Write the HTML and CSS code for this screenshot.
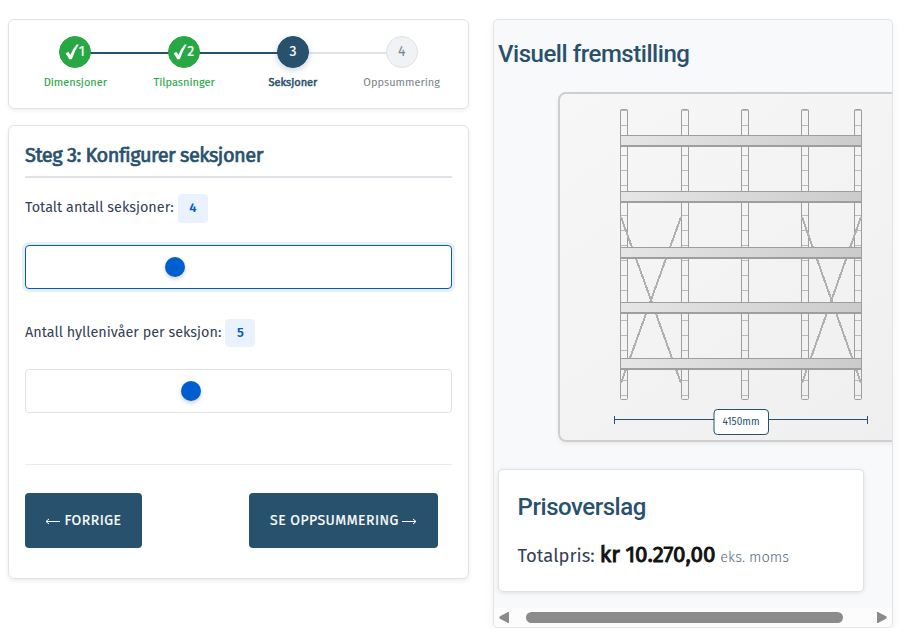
FILE: index.html
```html
<!DOCTYPE html>
<html lang="nb">
<head>
    <meta charset="UTF-8">
    <meta name="viewport" content="width=device-width, initial-scale=1.0">
    <title>Reolkonfigurator</title>
    <link rel="stylesheet" href="styles.css">
</head>
<body>
    <div class="konfigurator">
        <div class="venstre">
            <!-- Fremdrift -->
            <div class="fremdrift">
                <div class="steg ferdig">
                    <div class="sirkel"><svg class="hake" viewBox="0 0 14 16"><path d="M.6 9.4 L3.2 7.7 L5.4 10.8 Q8 4.5 11.7 .5 L13.8 .5 Q9.4 7 6.8 15.3 L4.2 15.3 Q2.8 12 .6 9.4Z"/></svg><span>1</span></div>
                    <div class="steg-navn">Dimensjoner</div>
                </div>
                <div class="steg ferdig">
                    <div class="sirkel"><svg class="hake" viewBox="0 0 14 16"><path d="M.6 9.4 L3.2 7.7 L5.4 10.8 Q8 4.5 11.7 .5 L13.8 .5 Q9.4 7 6.8 15.3 L4.2 15.3 Q2.8 12 .6 9.4Z"/></svg><span>2</span></div>
                    <div class="steg-navn">Tilpasninger</div>
                </div>
                <div class="steg aktiv">
                    <div class="sirkel"><span>3</span></div>
                    <div class="steg-navn">Seksjoner</div>
                </div>
                <div class="steg">
                    <div class="sirkel"><span>4</span></div>
                    <div class="steg-navn">Oppsummering</div>
                </div>
            </div>

            <!-- Skjema -->
            <div class="skjema">
                <h3>Steg 3: Konfigurer seksjoner</h3>
                <div class="felt">
                    <label for="seksjoner"><span>Totalt antall seksjoner:</span> <span class="verdi">4</span></label>
                    <input class="fokus" type="range" id="seksjoner" min="1" max="10" value="4">
                </div>
                <div class="felt">
                    <label for="nivaer"><span>Antall hyllenivåer per seksjon:</span> <span class="verdi">5</span></label>
                    <input type="range" id="nivaer" min="2" max="10" value="5">
                </div>
                <div class="knapper">
                    <button type="button" class="forrige"><svg class="pil" viewBox="0 0 15 7"><path d="M15 3.5 H1 M4 1 L1 3.5 L4 6"/></svg><span>FORRIGE</span></button>
                    <button type="button" class="neste"><span>SE OPPSUMMERING</span><svg class="pil" viewBox="0 0 15 7"><path d="M0 3.5 H14 M11 1 L14 3.5 L11 6"/></svg></button>
                </div>
            </div>
        </div>

        <div class="hoyre">
            <div class="innhold">
                <h2>Visuell fremstilling</h2>
                <div class="tegning">
                    <svg width="361" height="346" viewBox="0 0 361 346">
                        <defs>
                            <linearGradient id="stal">
                                <stop offset="0" stop-color="#e5e5e5"/>
                                <stop offset="1" stop-color="#cbcbcb"/>
                            </linearGradient>
                            <pattern id="trinn" width="8" height="15" y="1" patternUnits="userSpaceOnUse">
                                <rect width="8" height="1" fill="#bbb"/>
                            </pattern>
                            <g id="stolpe">
                                <rect x="0" y="15" width="8" height="291" fill="url(#trinn)"/>
                                <rect x=".5" y="15.5" width="7" height="290" rx="1" fill="none" stroke="#9e9e9e"/>
                            </g>
                            <g id="bjelke">
                                <rect width="242" height="12" fill="#9e9e9e"/>
                                <rect x="1" y="1" width="240" height="9" fill="url(#stal)"/>
                            </g>
                        </defs>
                        <use href="#stolpe" x="60"/>
                        <use href="#stolpe" x="121"/>
                        <use href="#stolpe" x="181"/>
                        <use href="#stolpe" x="241"/>
                        <use href="#stolpe" x="294"/>
                        <g class="kryss">
                            <path d="M61 123 L121 289 M121 123 L61 289"/>
                            <path d="M242 123 L301 289 M301 123 L242 289"/>
                        </g>
                        <use href="#bjelke" x="60" y="41"/>
                        <use href="#bjelke" x="60" y="97"/>
                        <use href="#bjelke" x="60" y="153"/>
                        <use href="#bjelke" x="60" y="208"/>
                        <use href="#bjelke" x="60" y="264"/>
                        <path class="mal" d="M54.5 322 V330 M54.5 325.5 H307.5 M307.5 322 V330"/>
                        <rect class="mal-boks" x="154" y="315.5" width="54.5" height="25" rx="3.5"/>
                        <text class="mal-tekst" x="162.5" y="331" textLength="37" lengthAdjust="spacingAndGlyphs">4150mm</text>
                    </svg>
                </div>
                <div class="pris">
                    <h2>Prisoverslag</h2>
                    <p><span>Totalpris:</span><strong>kr 10.270,00</strong><small>eks. moms</small></p>
                </div>
            </div>
            <div class="rullefelt">
                <svg width="10" height="13" viewBox="0 0 10 13"><path d="M10 1 V12 H9 L.5 7.5 V5.5 L9 1Z"/></svg>
                <div class="rulleknapp"></div>
                <svg width="10" height="13" viewBox="0 0 10 13"><path d="M0 1 V12 H1 L9.5 7.5 V5.5 L1 1Z"/></svg>
            </div>
        </div>
    </div>
</body>
</html>
```
FILE: styles.css
```css
* {
    box-sizing: border-box;
}

body {
    margin: 0;
    background-color: white;
    color: #334155;
    font-family: "Fira Sans", "Noto Sans", sans-serif;
    overflow: hidden;
}

.konfigurator {
    display: flex;
    align-items: flex-start;
    gap: 24px;
    padding: 19px 25px 0 8px;
}

.venstre {
    width: 461px;
    display: flex;
    flex-direction: column;
    gap: 16px;
}

.fremdrift {
    display: flex;
    height: 90px;
    padding: 16px 12px;
    border: 1px solid #e0e2e8;
    border-radius: 6px;
    box-shadow: 0 2px 4px rgba(0,0,0,0.06);
}

.steg {
    flex: 1;
    display: flex;
    flex-direction: column;
    align-items: center;
    color: #7b838b;
    position: relative;
}

/* linje mellom stegene */
.steg:not(:last-child)::after {
    content: "";
    position: absolute;
    top: 16px;
    left: 50%;
    width: 100%;
    height: 2px;
    background-color: #e0e4e8;
}

.steg.ferdig::after {
    background-color: #28516d;
}

.sirkel {
    width: 32px;
    height: 32px;
    display: flex;
    align-items: center;
    justify-content: center;
    border: 1px solid #e0e2e6;
    border-radius: 50%;
    background-color: #f1f2f5;
    font-size: 14px;
    font-weight: 400;
    line-height: 30px;
    position: relative;
    z-index: 1;
}

.ferdig .sirkel {
    background-color: #28a745;
    border-color: #28a745;
    color: white;
}

.aktiv .sirkel {
    background-color: #28516d;
    border-color: #28516d;
    color: white;
    box-shadow: 0 2px 6px rgba(40,81,109,0.25);
}

.ferdig .sirkel, .aktiv .sirkel {
    -webkit-text-stroke: 0.2px;
}

.hake {
    width: 14px;
    height: 16px;
    margin: 0 0 0 -1px;
    fill: white;
}

.steg-navn {
    margin-top: 7px;
    font-size: 11px;
    line-height: 16px;
    white-space: nowrap;
}

.ferdig .steg-navn {
    color: #28a745;
    -webkit-text-stroke: 0.1px;
}

.aktiv .steg-navn {
    color: #28516d;
    -webkit-text-stroke: 0.5px;
}

.skjema {
    height: 454px;
    padding: 15px 16px;
    border: 1px solid #e0e2e8;
    border-radius: 6px;
    box-shadow: 0 2px 4px rgba(0,0,0,0.08);
}

h3 {
    height: 37px;
    margin: 0 0 16px;
    border-bottom: 2px solid #dfe2e6;
    color: #28516d;
    font-size: 20px;
    font-weight: 400;
    line-height: 29px;
    letter-spacing: -0.5px;
    -webkit-text-stroke: 0.7px;
}

.felt {
    height: 125px;
}

label {
    display: flex;
    gap: 4px;
    height: 29px;
    margin-bottom: 22px;
    font-size: 14.4px;
    line-height: 27px;
    white-space: nowrap;
}

.felt + .felt label {
    height: 28px;
}

.verdi {
    width: 30px;
    border-radius: 4px;
    background-color: #ebf2ff;
    color: #005fcf;
    font-size: 13px;
    font-weight: 600;
    line-height: 28px;
    text-align: center;
}

input[type="range"] {
    -webkit-appearance: none;
    appearance: none;
    display: block;
    width: 100%;
    height: 44px;
    margin: 0;
    padding: 0 12px;
    border: 1px solid #dfe2e6;
    border-radius: 4px;
    background-color: white;
}

input[type="range"].fokus {
    border-color: #005bbf;
    box-shadow: 0 0 0 3px #e6f0fa;
}

input[type="range"]::-webkit-slider-thumb {
    -webkit-appearance: none;
    width: 20px;
    height: 20px;
    border-radius: 50%;
    background-color: #005fcf;
    box-shadow: 0 2px 4px rgba(0,0,0,0.2);
}

.knapper {
    display: flex;
    justify-content: space-between;
    margin-top: 20px;
    padding: 28px 14px 0 0;
    border-top: 1px solid #eaebed;
}

button {
    display: flex;
    align-items: center;
    justify-content: center;
    gap: 4px;
    height: 55px;
    padding: 0;
    border: none;
    border-radius: 4px;
    background-color: #28516d;
    color: white;
    font-family: inherit;
    font-size: 14px;
    font-weight: 400;
    letter-spacing: 0.48px;
    -webkit-text-stroke: 0.2px;
    white-space: nowrap;
}

.pil {
    width: 15px;
    height: 7px;
    margin-top: 2px;
    fill: none;
    stroke: white;
    stroke-width: 1;
}

.neste {
    gap: 3px;
}

.forrige {
    width: 117px;
}

.neste {
    width: 189px;
}

.hoyre {
    width: 400px;
    height: 609px;
    display: flex;
    flex-direction: column;
    justify-content: space-between;
    border: 1px solid #e0e4ea;
    border-radius: 5px;
    background-color: #f8f9fb;
    box-shadow: 0 3px 10px rgba(0,0,0,0.06);
    overflow: hidden;
}

.innhold {
    padding: 17px 4px 0;
}

h2 {
    margin: 0;
    color: #28516d;
    font-family: Roboto, sans-serif;
    font-size: 24px;
    font-weight: 500;
    line-height: 34px;
    letter-spacing: -0.46px;
}

.tegning {
    width: 365px;
    height: 350px;
    margin: 21px 0 27px 60px;
    border: 2px solid #cfcfcf;
    border-radius: 8px;
    background: linear-gradient(145deg, #f7f7f7, #efefef);
    box-shadow: 0 2px 4px rgba(0,0,0,0.06);
}

.tegning svg {
    display: block;
}

.kryss {
    fill: none;
    stroke: #b0b0b0;
    stroke-width: 2;
    shape-rendering: crispEdges;
}

.mal {
    fill: none;
    stroke: #28516d;
}

.mal-boks {
    fill: white;
    stroke: #28516d;
}

.mal-tekst {
    fill: #28516d;
    font-size: 11px;
}

.pris {
    width: 366px;
    height: 123px;
    padding: 20px 18.6px;
    border: 1px solid #dfe2e6;
    border-radius: 5px;
    background-color: white;
    box-shadow: 0 1px 4px rgba(0,0,0,0.1);
}

.pris p {
    display: flex;
    align-items: baseline;
    gap: 5px;
    margin: 14px 0 0;
    font-size: 18.4px;
    line-height: 34px;
    white-space: nowrap;
}

.pris strong {
    color: #111;
    font-size: 22.4px;
    font-weight: 400;
    letter-spacing: -0.1px;
    -webkit-text-stroke: 0.9px;
}

.pris small {
    color: #56687a;
    font-size: 14.6px;
    font-weight: 300;
}

.rullefelt {
    display: flex;
    align-items: center;
    height: 19px;
    padding: 0 5px;
    background-color: #fcfcfc;
    fill: #8b8b8b;
}

.rulleknapp {
    width: 317px;
    height: 11px;
    margin: 0 34px 0 17px;
    border-radius: 6px;
    background-color: #8b8b8b;
}
```
